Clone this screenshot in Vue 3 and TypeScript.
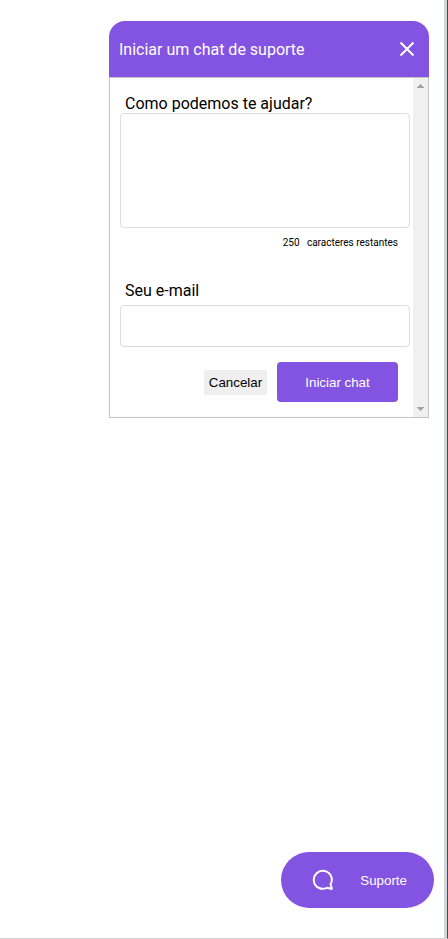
<script setup lang="ts">
import { computed, ref } from 'vue'

const limit = 250
const isOpen = ref(true)
const message = ref('')
const email = ref('')
const remaining = computed(() => limit - message.value.length)
</script>

<template>
  <main class="page">
    <section v-if="isOpen" class="panel">
      <header class="panel-header">
        <h1 class="panel-title">Iniciar um chat de suporte</h1>
        <button class="close" type="button" aria-label="Fechar" @click="isOpen = false">
          <svg width="16" height="16" viewBox="0 0 16 16">
            <path d="M1.5 1.5 14.5 14.5M14.5 1.5 1.5 14.5" fill="none" stroke="#fff" stroke-width="2" />
          </svg>
        </button>
      </header>
      <div class="panel-body">
        <form class="form" @submit.prevent>
          <label class="label" for="message">Como podemos te ajudar?</label>
          <textarea id="message" v-model="message" class="field message" :maxlength="limit"></textarea>
          <p class="counter"><span>{{ remaining }}</span><span>caracteres restantes</span></p>
          <label class="label" for="email">Seu e-mail</label>
          <input id="email" v-model="email" class="field email" type="email" />
          <div class="actions">
            <button class="cancel" type="button" @click="isOpen = false">Cancelar</button>
            <button class="start" type="submit">Iniciar chat</button>
          </div>
        </form>
        <div class="scrollbar">
          <svg width="7" height="4" viewBox="0 0 7 4" shape-rendering="crispEdges"><path d="M3 0h1v1h1v1h1v1h1v1H0V3h1V2h1V1h1z" fill="#a3a3a3" /></svg>
          <svg width="7" height="4" viewBox="0 0 7 4" shape-rendering="crispEdges"><path d="M0 0h7v1H6v1H5v1H4v1H3V3H2V2H1V1H0z" fill="#a3a3a3" /></svg>
        </div>
      </div>
    </section>
    <button class="support" type="button" @click="isOpen = true">
      <svg class="bubble" width="22" height="22" viewBox="0 0 22 22">
        <path d="M18.6 15.3A9 9 0 1 0 14.9 18.8L19.9 19.9Z" fill="none" stroke="#fff" stroke-width="2" stroke-linejoin="round" />
      </svg>
      <span>Suporte</span>
    </button>
  </main>
</template>

<style>
body {
  background: #fff;
}
</style>

<style scoped>
* {
  box-sizing: border-box;
}
.page {
  display: flex;
  flex-direction: column;
  align-items: flex-end;
  height: 939px;
  padding: 21px 13px 30px 0;
  border-right: 1px solid #484c52;
  border-bottom: 1px solid #d3d3d3;
  box-shadow: inset -3px 0 #d1d7db;
  font-family: Roboto, sans-serif;
  font-size: 16px;
  color: #000;
}
button {
  margin: 0;
  padding: 0;
  border: 0;
  font: 13.333px "Liberation Sans", Arial, sans-serif;
}
.panel {
  width: 320px;
  margin-right: 5px;
}
.panel-header {
  display: flex;
  align-items: center;
  justify-content: space-between;
  height: 56px;
  padding: 0 14px 0 10px;
  border-radius: 16px 16px 0 0;
  background: #8353e1;
}
.panel-title {
  margin: 0;
  font-size: 16px;
  font-weight: 400;
  color: #fff;
}
.close {
  display: flex;
  background: none;
}
.panel-body {
  display: flex;
  height: 341px;
  border: 1px solid #c4c4c4;
}
.form {
  display: flex;
  flex-direction: column;
  flex: 1;
  padding: 16px 3px 0 10px;
}
.label {
  padding-left: 5px;
  line-height: 19px;
}
.field {
  width: 290px;
  margin: 0;
  padding: 10px;
  border: 1px solid #dcdcdc;
  border-radius: 4px;
  background: #fff;
  font: inherit;
  outline: none;
  resize: none;
}
.message {
  height: 115px;
}
.counter {
  display: flex;
  justify-content: flex-end;
  gap: 7.4px;
  margin: 8px 12px 32px 0;
  font-size: 10px;
  line-height: 13px;
}
.email {
  height: 42px;
  margin-top: 5px;
}
.actions {
  display: flex;
  align-items: center;
  justify-content: flex-end;
  gap: 10px;
  margin: 15px 12px 0 0;
}
.cancel {
  width: 63px;
  height: 25px;
  background: #efefef;
  color: #000;
}
.start {
  width: 121px;
  height: 40px;
  border-radius: 4px;
  background: #8353e1;
  color: #fff;
}
.scrollbar {
  display: flex;
  flex-direction: column;
  align-items: center;
  justify-content: space-between;
  width: 15px;
  padding: 6px 0;
  background: #f0f0f0;
}
.support {
  display: flex;
  align-items: center;
  width: 153px;
  height: 56px;
  margin-top: auto;
  padding-left: 31px;
  border-radius: 28px;
  background: #8353e1;
  color: #fff;
}
.bubble {
  margin-right: 26.3px;
}
</style>
